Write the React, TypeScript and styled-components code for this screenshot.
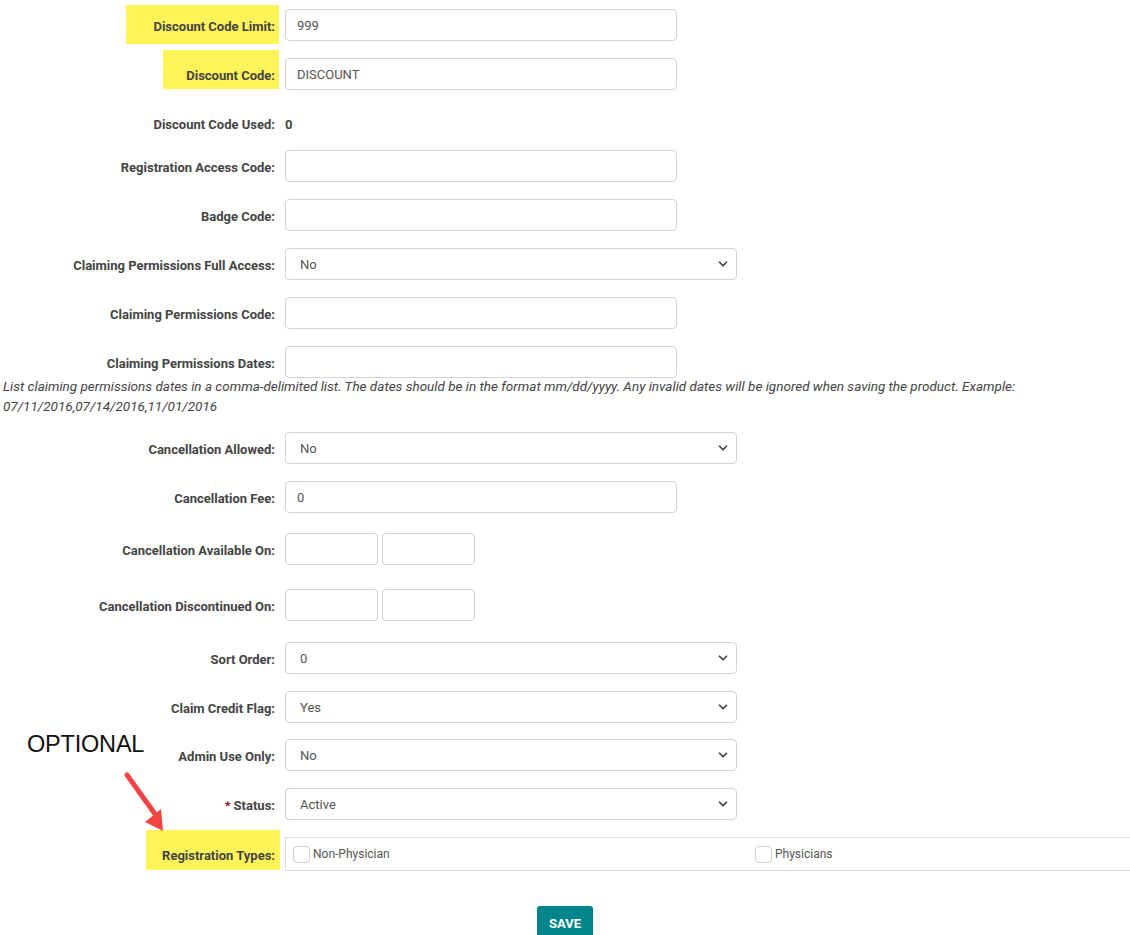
import React from "react";
import styled, { createGlobalStyle } from "styled-components";
import { ChevronDown } from "lucide-react";

const Global = createGlobalStyle`
  html, body { margin: 0; padding: 0; background: #fff; }
  body { font-family: Roboto, "Noto Sans", Arial, sans-serif; overflow: hidden; }
  * { box-sizing: border-box; }
`;

const Page = styled.div`
  position: relative;
  width: 1130px;
  height: 935px;
  overflow: hidden;
  padding-top: 9px;
`;

const Row = styled.div<{ $mb: number }>`
  display: flex;
  align-items: center;
  margin-bottom: ${(p) => p.$mb}px;
`;

const LabelCell = styled.div`
  position: relative;
  width: 280px;
  flex: none;
  padding-right: 5px;
  padding-top: 2px;
  text-align: right;
  font-size: 13px;
  font-weight: 700;
  color: #444;
  margin-right: 5px;
`;

const LabelText = styled.span`
  position: relative;
  z-index: 1;
`;

const Highlight = styled.span<{ $left: number; $top: number; $h: number; $w: number }>`
  position: absolute;
  left: ${(p) => p.$left}px;
  top: 50%;
  margin-top: ${(p) => p.$top}px;
  width: ${(p) => p.$w}px;
  height: ${(p) => p.$h}px;
  background: #fff35a;
`;

const Required = styled.span`
  color: #8b1a2b;
  margin-right: 3px;
`;

const TextInput = styled.input<{ $w?: number }>`
  width: ${(p) => p.$w ?? 392}px;
  height: 32px;
  border: 1px solid #d4d4d4;
  border-radius: 4px;
  padding: 0 11px;
  font-family: Roboto, Arial, sans-serif;
  font-size: 13px;
  color: #555;
  background: #fff;
  outline: none;
`;

const DatePair = styled.div`
  display: flex;
  gap: 4px;
`;

const SelectWrap = styled.div`
  position: relative;
  width: 452px;
  height: 32px;
`;

const Select = styled.select`
  appearance: none;
  -webkit-appearance: none;
  width: 100%;
  height: 32px;
  border: 1px solid #d4d4d4;
  border-radius: 4px;
  padding: 0 14px;
  font-family: Roboto, Arial, sans-serif;
  font-size: 13px;
  color: #555;
  background: #fff;
  outline: none;
`;

const Chevron = styled.span`
  position: absolute;
  right: 7px;
  top: 50%;
  transform: translateY(-50%);
  display: flex;
  color: #444;
  pointer-events: none;
`;

const Value = styled.span`
  padding-top: 2px;
  font-size: 13px;
  font-weight: 700;
  color: #444;
`;

const Help = styled.p`
  margin: -2px 0 16px 0;
  padding-left: 3px;
  font-size: 13.5px;
  font-style: italic;
  line-height: 20px;
  color: #444;
`;

const TypesBox = styled.div`
  flex: 1;
  height: 34px;
  margin-right: -20px;
  border: 1px solid #dcdcdc;
  display: grid;
  grid-template-columns: 462px 462px;
  align-items: center;
  padding-left: 7px;
`;

const CheckItem = styled.label`
  display: flex;
  align-items: center;
  font-size: 12px;
  color: #555;
`;

const Box = styled.span`
  width: 17px;
  height: 17px;
  border: 1px solid #cfcfcf;
  border-radius: 4px;
  background: #fff;
  margin-right: 3px;
`;

const SaveRow = styled.div`
  display: flex;
  justify-content: center;
`;

const SaveButton = styled.button`
  width: 56px;
  height: 34px;
  border: none;
  border-radius: 3px;
  background: #00858a;
  color: #fff;
  font-family: Roboto, Arial, sans-serif;
  font-size: 13px;
  font-weight: 700;
  padding: 0;
`;

const Optional = styled.div`
  position: absolute;
  left: 27px;
  top: 731px;
  font-family: "Liberation Sans", Arial, sans-serif;
  font-size: 23.5px;
  color: #111;
  letter-spacing: -0.2px;
`;

const Arrow = styled.svg`
  position: absolute;
  left: 110px;
  top: 760px;
`;

type SelProps = { value: string };
const Sel = ({ value }: SelProps) => (
  <SelectWrap>
    <Select defaultValue={value}>
      <option>{value}</option>
    </Select>
    <Chevron>
      <ChevronDown size={14} strokeWidth={3} />
    </Chevron>
  </SelectWrap>
);

export default function App() {
  return (
    <>
      <Global />
      <Page>
        <Row $mb={17}>
          <LabelCell>
            <Highlight $left={126} $top={-20} $h={39} $w={153} />
            <LabelText>Discount Code Limit:</LabelText>
          </LabelCell>
          <TextInput defaultValue="999" />
        </Row>
        <Row $mb={17}>
          <LabelCell>
            <Highlight $left={163} $top={-24} $h={39} $w={116} />
            <LabelText>Discount Code:</LabelText>
          </LabelCell>
          <TextInput defaultValue="DISCOUNT" />
        </Row>
        <Row $mb={11} style={{ height: 32 }}>
          <LabelCell>
            <LabelText>Discount Code Used:</LabelText>
          </LabelCell>
          <Value>0</Value>
        </Row>
        <Row $mb={17}>
          <LabelCell>
            <LabelText>Registration Access Code:</LabelText>
          </LabelCell>
          <TextInput />
        </Row>
        <Row $mb={17}>
          <LabelCell>
            <LabelText>Badge Code:</LabelText>
          </LabelCell>
          <TextInput />
        </Row>
        <Row $mb={17}>
          <LabelCell>
            <LabelText>Claiming Permissions Full Access:</LabelText>
          </LabelCell>
          <Sel value="No" />
        </Row>
        <Row $mb={17}>
          <LabelCell>
            <LabelText>Claiming Permissions Code:</LabelText>
          </LabelCell>
          <TextInput />
        </Row>
        <Row $mb={0}>
          <LabelCell>
            <LabelText>Claiming Permissions Dates:</LabelText>
          </LabelCell>
          <TextInput />
        </Row>
        <Help>
          List claiming permissions dates in a comma-delimited list. The dates should be in the format mm/dd/yyyy. Any
          invalid dates will be ignored when saving the product. Example:
          <br />
          07/11/2016,07/14/2016,11/01/2016
        </Help>
        <Row $mb={17}>
          <LabelCell>
            <LabelText>Cancellation Allowed:</LabelText>
          </LabelCell>
          <Sel value="No" />
        </Row>
        <Row $mb={20}>
          <LabelCell>
            <LabelText>Cancellation Fee:</LabelText>
          </LabelCell>
          <TextInput defaultValue="0" />
        </Row>
        <Row $mb={24}>
          <LabelCell>
            <LabelText>Cancellation Available On:</LabelText>
          </LabelCell>
          <DatePair>
            <TextInput $w={93} />
            <TextInput $w={93} />
          </DatePair>
        </Row>
        <Row $mb={21}>
          <LabelCell>
            <LabelText>Cancellation Discontinued On:</LabelText>
          </LabelCell>
          <DatePair>
            <TextInput $w={93} />
            <TextInput $w={93} />
          </DatePair>
        </Row>
        <Row $mb={17}>
          <LabelCell>
            <LabelText>Sort Order:</LabelText>
          </LabelCell>
          <Sel value="0" />
        </Row>
        <Row $mb={16}>
          <LabelCell>
            <LabelText>Claim Credit Flag:</LabelText>
          </LabelCell>
          <Sel value="Yes" />
        </Row>
        <Row $mb={17}>
          <LabelCell>
            <LabelText>Admin Use Only:</LabelText>
          </LabelCell>
          <Sel value="No" />
        </Row>
        <Row $mb={17}>
          <LabelCell>
            <LabelText>
              <Required>*</Required>Status:
            </LabelText>
          </LabelCell>
          <Sel value="Active" />
        </Row>
        <Row $mb={35}>
          <LabelCell>
            <Highlight $left={146} $top={-24} $h={40} $w={134} />
            <LabelText>Registration Types:</LabelText>
          </LabelCell>
          <TypesBox>
            <CheckItem>
              <Box />
              Non-Physician
            </CheckItem>
            <CheckItem>
              <Box />
              Physicians
            </CheckItem>
          </TypesBox>
        </Row>
        <SaveRow>
          <SaveButton>SAVE</SaveButton>
        </SaveRow>

        <Optional>OPTIONAL</Optional>
        <Arrow width="80" height="80" viewBox="0 0 80 80">
          <line x1="17" y1="15" x2="45" y2="54" stroke="#f34444" strokeWidth="5" strokeLinecap="round" />
          <polygon points="35,62 51,49 53,71" fill="#f34444" />
        </Arrow>
      </Page>
    </>
  );
}
